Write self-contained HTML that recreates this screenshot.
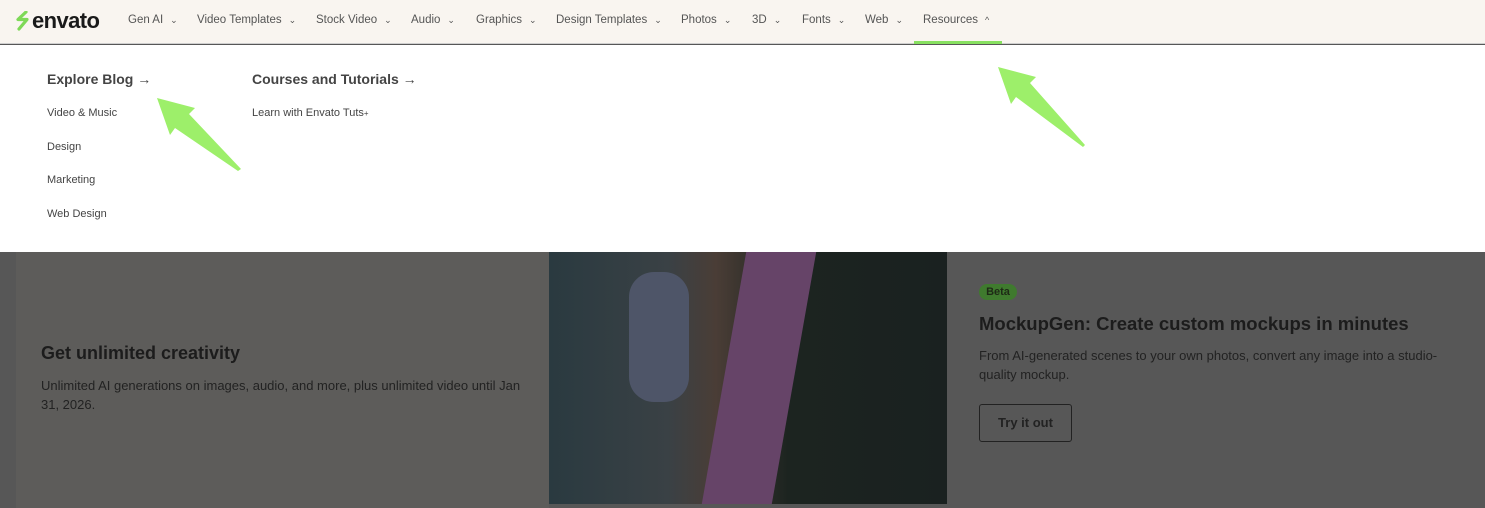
<!DOCTYPE html>
<html><head><style>
*{margin:0;padding:0;box-sizing:border-box}
body{width:1485px;height:508px;overflow:hidden;background:#575757;font-family:"Liberation Sans",sans-serif;position:relative}
.nav{position:absolute;left:0;top:0;width:1485px;height:44px;background:#f9f5f0;border-bottom:1px solid #cfcfcf}
.logo{position:absolute;left:16px;top:8px;font-weight:bold;font-size:22px;color:#1a1a1a;letter-spacing:-0.6px}
.item{position:absolute;top:14px;font-size:11.5px;color:#555}
.item span{font-size:9px;margin-left:7px}
.drop{position:absolute;left:0;top:45px;width:1485px;height:207px;background:#fff}
.h{position:absolute;font-size:14px;font-weight:bold;color:#444}
.l{position:absolute;font-size:11px;color:#444}
.card{position:absolute;left:16px;top:252px;width:533px;height:256px;background:#5d5c5a}
.img{position:absolute;left:549px;top:252px;width:398px;height:252px;background:linear-gradient(90deg,#2a3a40 0%,#3a4145 30%,#4a3d36 42%,#1c2420 60%,#1a2120 100%);overflow:hidden}
</style></head><body>
<div class="nav">
<svg style="position:absolute;left:15px;top:11px" width="16" height="20" viewBox="0 0 16 20"><path d="M11 1L3 8.5h9L4 18" stroke="#7ed957" stroke-width="3.2" fill="none" stroke-linecap="round" stroke-linejoin="round"/></svg>
<div class="logo" style="left:32px">envato</div>
<div class="item" style="left:128px">Gen AI<span>⌄</span></div>
<div class="item" style="left:197px">Video Templates<span>⌄</span></div>
<div class="item" style="left:316px">Stock Video<span>⌄</span></div>
<div class="item" style="left:411px">Audio<span>⌄</span></div>
<div class="item" style="left:476px">Graphics<span>⌄</span></div>
<div class="item" style="left:556px">Design Templates<span>⌄</span></div>
<div class="item" style="left:681px">Photos<span>⌄</span></div>
<div class="item" style="left:752px">3D<span>⌄</span></div>
<div class="item" style="left:802px">Fonts<span>⌄</span></div>
<div class="item" style="left:865px">Web<span>⌄</span></div>
<div class="item" style="left:923px">Resources<span>^</span></div>
<div style="position:absolute;left:914px;top:41px;width:88px;height:3px;background:#87e060"></div>
</div>
<div class="drop">
<div class="h" style="left:47px;top:26px">Explore Blog <span style="font-weight:normal">→</span></div>
<div class="h" style="left:252px;top:26px">Courses and Tutorials <span style="font-weight:normal">→</span></div>
<div class="l" style="left:47px;top:62px">Video &amp; Music</div>
<div class="l" style="left:47px;top:96px">Design</div>
<div class="l" style="left:47px;top:129px">Marketing</div>
<div class="l" style="left:47px;top:163px">Web Design</div>
<div class="l" style="left:252px;top:62px">Learn with Envato Tuts<span style="font-size:8px">+</span></div>
</div>
<div class="card">
<div style="position:absolute;left:25px;top:91px;font-size:18px;font-weight:bold;color:#1c1c1c">Get unlimited creativity</div>
<div style="position:absolute;left:25px;top:124px;width:485px;font-size:13px;line-height:19px;color:#222">Unlimited AI generations on images, audio, and more, plus unlimited video until Jan 31, 2026.</div>
</div>
<div class="img">
<div style="position:absolute;left:175px;top:0;width:70px;height:252px;background:#664468;transform:skewX(-10deg)"></div>
<div style="position:absolute;left:80px;top:20px;width:60px;height:130px;background:#4e5568;border-radius:25px"></div>
</div>
<div style="position:absolute;left:979px;top:284px;width:38px;height:16px;border-radius:8px;background:#3f7a2e;font-size:11px;font-weight:bold;color:#1e2a16;text-align:center;line-height:16px">Beta</div>
<div style="position:absolute;left:979px;top:313px;font-size:18.5px;font-weight:bold;color:#1c1c1c">MockupGen: Create custom mockups in minutes</div>
<div style="position:absolute;left:979px;top:346px;width:470px;font-size:13px;line-height:19px;color:#222">From AI-generated scenes to your own photos, convert any image into a studio-quality mockup.</div>
<div style="position:absolute;left:979px;top:404px;width:93px;height:38px;border:1px solid #222;border-radius:3px;font-size:13px;font-weight:bold;color:#222;text-align:center;line-height:36px">Try it out</div>
<svg style="position:absolute;left:0;top:0" width="1485" height="508"><polygon fill="#9def6a" points="998,67 1036,77 1030,83 1085,145 1083,147 1016,97 1011,104"/><polygon fill="#9def6a" points="157,98 195,108 189,114 241,169 238,171 175,128 170,135"/></svg>
</body></html>
